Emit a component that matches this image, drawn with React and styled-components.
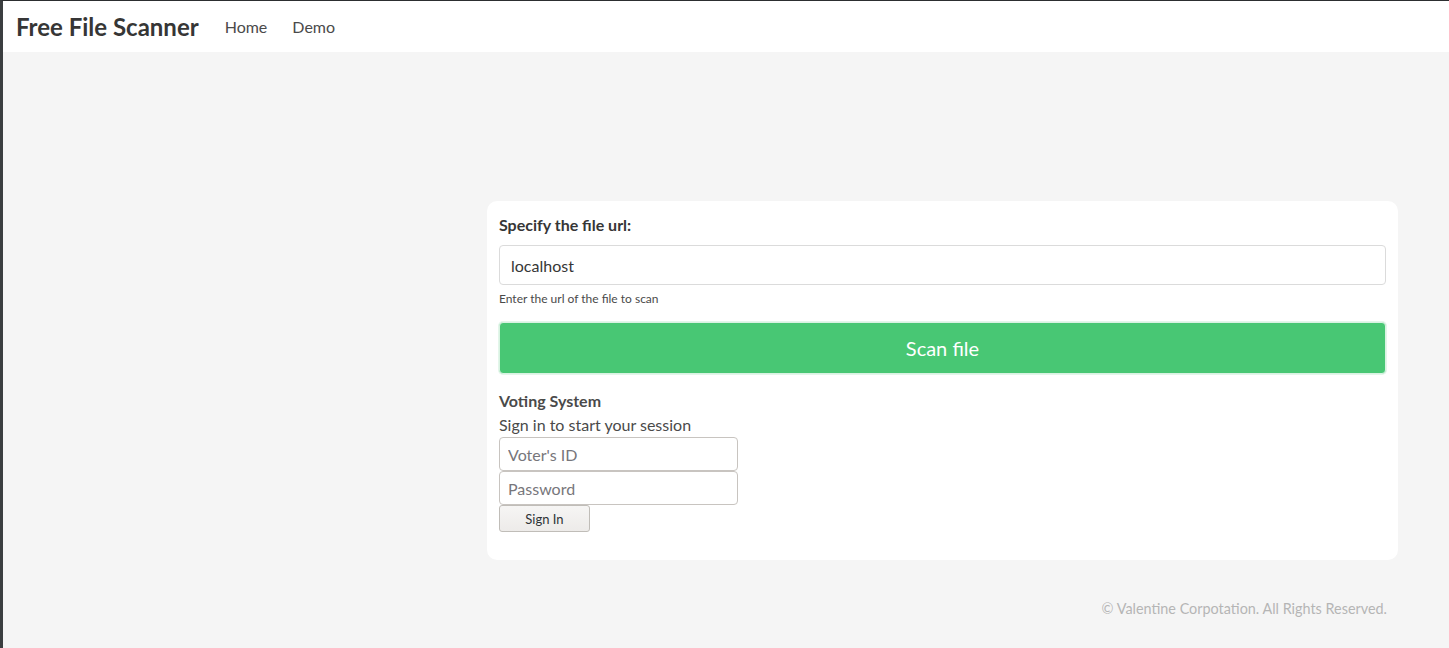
import styled, { createGlobalStyle } from "styled-components";

const GlobalStyle = createGlobalStyle`
  * { box-sizing: border-box; }
  html, body {
    margin: 0;
    padding: 0;
    height: 100%;
  }
  body {
    font-family: Lato, "Noto Sans", sans-serif;
    color: #4a4a4a;
    background: #f5f5f5;
    border-left: 3px solid #3b3e40;
    border-top: 1px solid #2c2e30;
  }
`;

const Page = styled.div`
  min-height: 647px;
  display: flex;
  flex-direction: column;
`;

const Navbar = styled.nav`
  height: 51px;
  background: #ffffff;
  display: flex;
  align-items: center;
  padding-left: 13px;
`;

const Brand = styled.a`
  font-size: 24px;
  font-weight: 700;
  color: #363636;
  margin-right: 26px;
`;

const NavItem = styled.a`
  font-size: 16px;
  color: #4a4a4a;
  margin-right: 25px;
`;

const Main = styled.main`
  display: flex;
  justify-content: flex-end;
  padding: 149px 51px 0 0;
`;

const Box = styled.section`
  width: 911px;
  background: #ffffff;
  border-radius: 10px;
  padding: 14px 12px 28px;
  display: flex;
  flex-direction: column;
`;

const Label = styled.label`
  font-size: 16px;
  font-weight: 700;
  color: #363636;
  margin-bottom: 11px;
`;

const UrlInput = styled.input`
  height: 40px;
  border: 1px solid #dbdbdb;
  border-radius: 4px;
  padding: 0 11px;
  font: inherit;
  font-size: 16px;
  color: #363636;
  outline: none;
`;

const Help = styled.p`
  font-size: 12px;
  color: #4a4a4a;
  margin: 6px 0 16px;
`;

const ScanButton = styled.button`
  height: 52px;
  background: #48c774;
  color: #ffffff;
  border: 1px solid #d9f2e2;
  box-shadow: 0 0 0 1px #e3f6ea;
  border-radius: 4px;
  font: inherit;
  font-size: 20px;
  margin-bottom: 17px;
`;

const Heading = styled.h3`
  font-size: 16px;
  font-weight: 700;
  color: #4a4a4a;
  margin: 0 0 5px;
`;

const Sub = styled.p`
  font-size: 16px;
  margin: 0 0 3px;
`;

const LoginForm = styled.form`
  display: flex;
  flex-direction: column;
  align-items: flex-start;
`;

const SmallInput = styled.input`
  width: 239px;
  height: 34px;
  border: 1px solid #c8c4c0;
  border-radius: 4px;
  padding: 0 8px;
  font: inherit;
  font-size: 16px;
  outline: none;
  &::placeholder { color: #77767b; }
`;

const SignIn = styled.button`
  width: 91px;
  height: 27px;
  border: 1px solid #c0bdb8;
  border-radius: 3px;
  background: linear-gradient(#f6f5f4, #edebe9);
  font: inherit;
  font-size: 13px;
  color: #2e3436;
`;

const Footer = styled.footer`
  text-align: right;
  padding: 40px 62px 0 0;
  font-size: 14.4px;
  color: #b5b5b5;
`;

export default function App() {
  return (
    <Page>
      <GlobalStyle />
      <Navbar>
        <Brand>Free File Scanner</Brand>
        <NavItem>Home</NavItem>
        <NavItem>Demo</NavItem>
      </Navbar>
      <Main>
        <Box>
          <Label>Specify the file url:</Label>
          <UrlInput defaultValue="localhost" />
          <Help>Enter the url of the file to scan</Help>
          <ScanButton>Scan file</ScanButton>
          <Heading>Voting System</Heading>
          <Sub>Sign in to start your session</Sub>
          <LoginForm onSubmit={(e) => e.preventDefault()}>
            <SmallInput placeholder="Voter's ID" />
            <SmallInput type="password" placeholder="Password" />
            <SignIn>Sign In</SignIn>
          </LoginForm>
        </Box>
      </Main>
      <Footer>© Valentine Corpotation. All Rights Reserved.</Footer>
    </Page>
  );
}
